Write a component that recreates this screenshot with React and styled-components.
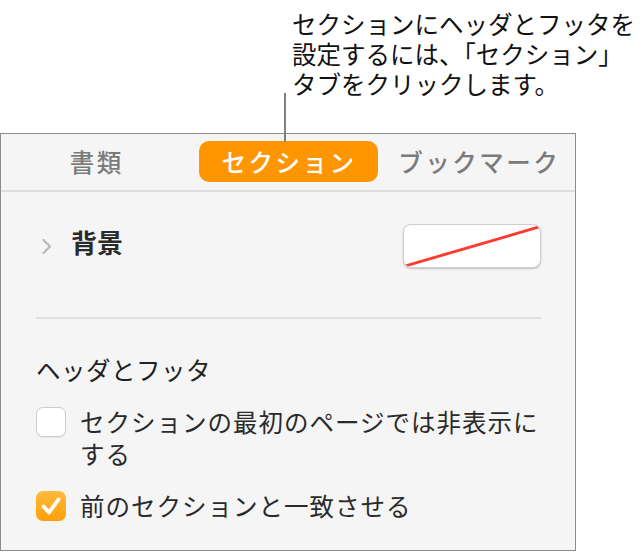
import styled, { createGlobalStyle } from "styled-components";

const GlobalStyle = createGlobalStyle`
  html, body {
    margin: 0;
    padding: 0;
    background: #ffffff;
  }
  body {
    font-family: "Noto Sans CJK JP", "Noto Sans", sans-serif;
    color: #262626;
  }
`;

const Page = styled.div`
  position: relative;
  width: 644px;
  height: 553px;
  padding-top: 9px;
  box-sizing: border-box;
  overflow: hidden;
`;

const Callout = styled.p`
  margin: 0 0 0 292px;
  font-size: 24.5px;
  line-height: 30px;
  color: #111;
  white-space: nowrap;
`;

// leader line from the callout down onto the tab
const Leader = styled.span`
  position: absolute;
  left: 284px;
  top: 93px;
  width: 2px;
  height: 49px;
  background: #808080;
  z-index: 2;
`;

const Panel = styled.div`
  margin-top: 34px;
  width: 576px;
  height: 418px;
  box-sizing: border-box;
  background: #f5f5f5;
  border: 1px solid #8c8c8c;
`;

const TabBar = styled.div`
  display: grid;
  grid-template-columns: repeat(3, 1fr);
  align-items: center;
  height: 58px;
  padding: 7px 0 9px;
  box-sizing: border-box;
  border-bottom: 2px solid #dedede;
`;

const Tab = styled.div`
  justify-self: center;
  display: flex;
  align-items: center;
  justify-content: center;
  height: 41px;
  width: ${(p) => (p.$active ? "179px" : "auto")};
  margin-left: ${(p) => (p.$active ? "2px" : "0")};
  border-radius: 10px;
  background: ${(p) => (p.$active ? "#ff9500" : "transparent")};
  color: ${(p) => (p.$active ? "#ffffff" : "#7b7b7b")};
  font-size: 24.5px;
  font-weight: 500;
  letter-spacing: 2.5px;
`;

const Body = styled.div`
  padding: 0 34px 0 35px;
`;

const BgRow = styled.div`
  display: flex;
  align-items: center;
  margin-top: 32px;
`;

const Chevron = styled.svg`
  width: 12px;
  height: 17px;
  margin: 0 18px 0 5px;
  flex: none;
`;

const RowLabel = styled.span`
  font-size: 26px;
  line-height: 32px;
  font-weight: 700;
  color: #2a2a2a;
  margin-bottom: 8px;
`;

const Swatch = styled.div`
  margin-left: auto;
  width: 138px;
  height: 44px;
  box-sizing: border-box;
  background: #ffffff;
  border: 1px solid #cfcfcf;
  border-radius: 8px;
  box-shadow: 0 1px 2px rgba(0, 0, 0, 0.22);
  overflow: hidden;

  svg {
    display: block;
    width: 100%;
    height: 100%;
  }
`;

const Divider = styled.hr`
  margin: 49px 0 0;
  border: none;
  height: 2px;
  background: #dfdfdf;
`;

const Heading = styled.h3`
  margin: 34px 0 0;
  font-size: 24.5px;
  line-height: 34px;
  font-weight: 400;
  color: #222;
  letter-spacing: 0.5px;
`;

const CheckRow = styled.label`
  display: flex;
  align-items: flex-start;
  gap: 14px;
  margin-top: ${(p) => p.$gap}px;
`;

const Box = styled.span`
  flex: none;
  width: 30px;
  height: 30px;
  box-sizing: border-box;
  border-radius: 7px;
  margin-top: 1px;
  display: flex;
  align-items: center;
  justify-content: center;
  background: ${(p) =>
    p.$checked ? "linear-gradient(#ffbb3c, #ff9f0a)" : "#ffffff"};
  border: ${(p) => (p.$checked ? "none" : "1px solid #cdcdcd")};
  box-shadow: ${(p) => (p.$checked ? "none" : "0 1px 1px rgba(0,0,0,0.06)")};
`;

const CheckText = styled.span`
  font-size: 24.5px;
  line-height: 32px;
  color: #2a2a2a;
  letter-spacing: 1px;
  width: 470px;
`;

function Check({ checked, gap, children }) {
  return (
    <CheckRow $gap={gap}>
      <Box $checked={checked}>
        {checked && (
          <svg width="22" height="20" viewBox="0 0 22 20">
            <path
              d="M3.5 10.5 L9 16.5 L18.5 3.5"
              fill="none"
              stroke="#ffffff"
              strokeWidth="3.8"
              strokeLinecap="round"
              strokeLinejoin="round"
            />
          </svg>
        )}
      </Box>
      <CheckText>{children}</CheckText>
    </CheckRow>
  );
}

export default function App() {
  return (
    <Page>
      <GlobalStyle />
      <Callout>
        セクションにヘッダとフッタを
        <br />
        設定するには、「セクション」
        <br />
        タブをクリックします。
      </Callout>
      <Leader />
      <Panel>
        <TabBar>
          <Tab>書類</Tab>
          <Tab $active>セクション</Tab>
          <Tab>ブックマーク</Tab>
        </TabBar>
        <Body>
          <BgRow>
            <Chevron viewBox="0 0 12 17">
              <path
                d="M2.5 2 L9 8.5 L2.5 15"
                fill="none"
                stroke="#bcbcbc"
                strokeWidth="2.4"
                strokeLinecap="round"
                strokeLinejoin="round"
              />
            </Chevron>
            <RowLabel>背景</RowLabel>
            <Swatch>
              <svg viewBox="0 0 138 44" preserveAspectRatio="none">
                <line
                  x1="1"
                  y1="43"
                  x2="137"
                  y2="2"
                  stroke="#ff3b30"
                  strokeWidth="3"
                />
              </svg>
            </Swatch>
          </BgRow>
          <Divider />
          <Heading>ヘッダとフッタ</Heading>
          <Check gap={19}>セクションの最初のページでは非表示にする</Check>
          <Check gap={20} checked>
            前のセクションと一致させる
          </Check>
        </Body>
      </Panel>
    </Page>
  );
}
